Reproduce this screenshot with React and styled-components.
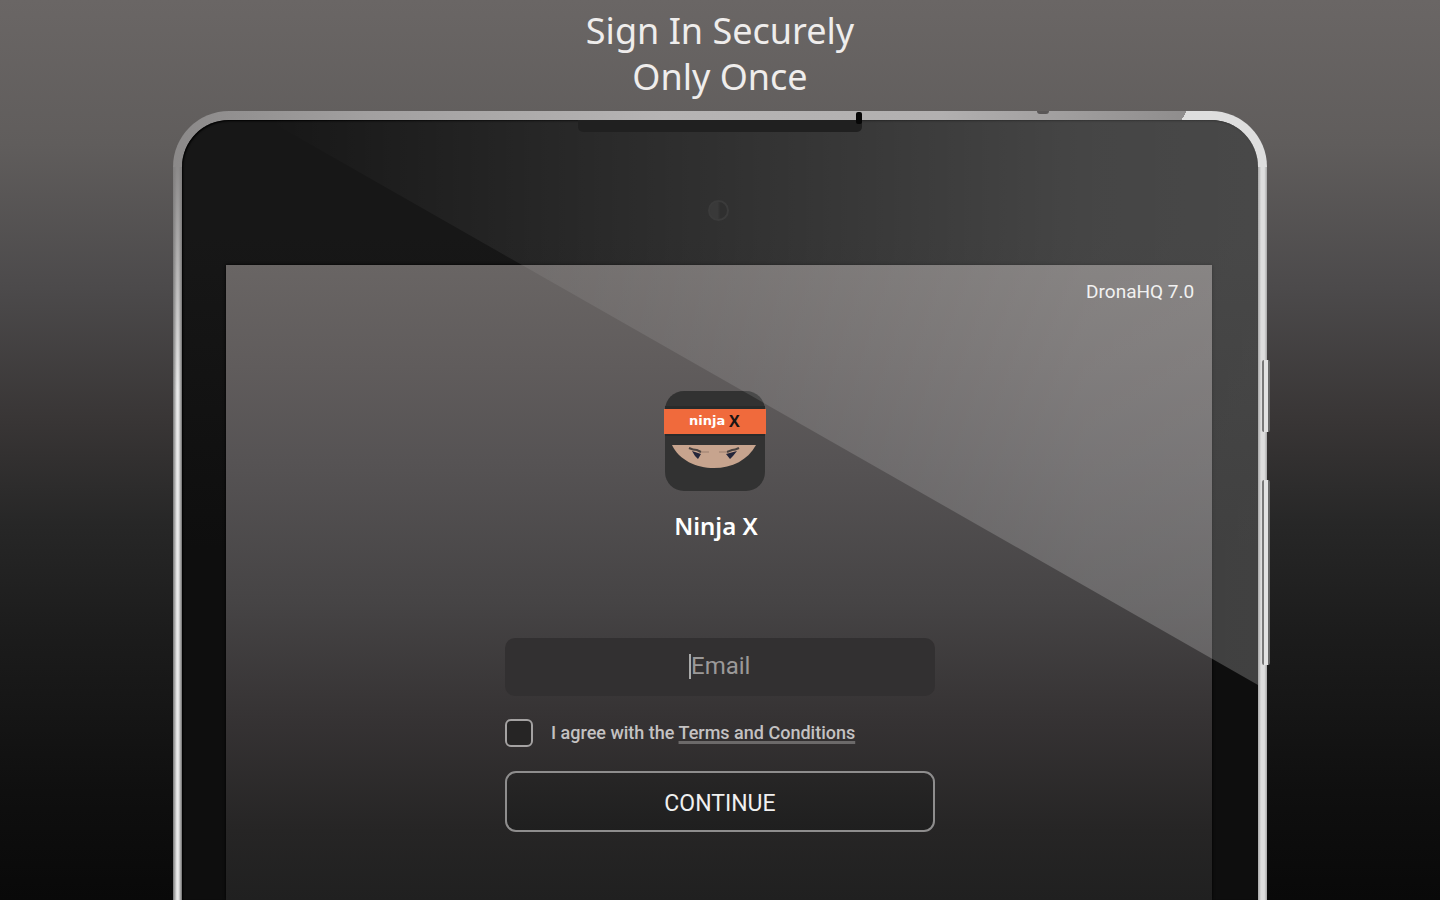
import styled, { createGlobalStyle } from "styled-components";

const GlobalStyle = createGlobalStyle`
    * {
        box-sizing: border-box;
    }

    body {
        margin: 0;
        background: #0a0a0a;
        font-family: Roboto, "Liberation Sans", sans-serif;
    }
`;
const Page = styled.main`
    display: flex;
    flex-direction: column;
    align-items: center;
    min-height: 100vh;
    overflow: hidden;
    background: linear-gradient(#6a6665 0%, #605d5c 16%, #4c4a4b 32%, #383535 47%, #272727 58%, #1c1c1c 70%, #0f0f0f 88%, #090909 100%);
`;
const Headline = styled.h1`
    margin: 0;
    padding: 8px 0 11px;
    color: #efedec;
    font-family: "Noto Sans", sans-serif;
    font-size: 36px;
    font-weight: 400;
    line-height: 46px;
    text-align: center;
`;
const Tablet = styled.section`
    position: relative;
    display: flex;
    flex: 1;
    width: 76%;
    padding: 9px 9px 0;
    border-radius: 56px 56px 0 0;
    background:
        linear-gradient(120deg, transparent 90%, #dedede 90%) top / 100% 56px no-repeat,
        linear-gradient(90deg, #8b8989 0%, #a2a0a0 18%, #b6b4b4 45%, #b2b0b0 70%, #8f8d8d 92.5%) top / 100% 56px no-repeat,
        linear-gradient(rgba(130, 128, 128, 0.9) 56px, rgba(130, 128, 128, 0) 280px) left / 9px 100% no-repeat,
        linear-gradient(90deg, #777777, #ededed 45%, #dedede 65%, #6e6e6e 100%) left / 9px 100% no-repeat,
        linear-gradient(90deg, #a8a8a8, #dedede 35%, #dedede 70%, #a8a8a8 100%) right / 9px 100% no-repeat,
        #111111;
`;
const Bezel = styled.div`
    position: relative;
    display: flex;
    flex: 1;
    padding: 145px 46px 0 44px;
    border-radius: 47px 47px 0 0;
    background: linear-gradient(#171717 15%, #0e0e0e 55%);
    box-shadow: inset 1px 1px 2px #000000;
    overflow: hidden;
`;
const Glare = styled.div`
    position: absolute;
    inset: 0;
    background: linear-gradient(90deg, rgba(255, 255, 255, 0) 8%, rgba(255, 255, 255, 0.2) 84%, rgba(255, 255, 255, 0.21) 100%);
    clip-path: polygon(86px 0, 100% 0, 100% 565px);
    pointer-events: none;
`;
const Speaker = styled.div`
    position: absolute;
    top: 9px;
    left: 37%;
    width: 26%;
    height: 12px;
    border-radius: 0 0 5px 5px;
    background: #202020;
    z-index: 1;
`;
const Slot = styled.span`
    position: absolute;
    right: 0;
    top: -8px;
    width: 6px;
    height: 12px;
    border-radius: 2px;
    background: #070707;
`;
const Microphone = styled.span`
    position: absolute;
    top: 0;
    left: 79%;
    width: 12px;
    height: 3px;
    border-radius: 0 0 6px 6px;
    background: #5a5757;
`;
const Camera = styled.span`
    position: absolute;
    top: 80px;
    left: 50%;
    width: 21px;
    height: 21px;
    margin-left: -12px;
    border: 2px solid #3b3b3b;
    border-radius: 50%;
    background: linear-gradient(90deg, #393939 45%, #2f2f2f 60%);
    z-index: 1;
`;
const SideKey = styled.span`
    position: absolute;
    top: ${(props) => props.$top}px;
    right: -3px;
    width: 8px;
    height: ${(props) => props.$height}px;
    border-left: 2px solid #777777;
    border-right: 2px solid #666666;
    border-radius: 2px;
    background: #e2e2e2;
`;
const Screen = styled.div`
    display: flex;
    flex: 1;
    flex-direction: column;
    align-items: center;
    padding: 16px 18px 16px 20px;
    background: linear-gradient(#696564 0%, #605c5c 16%, #565354 31%, #464445 53%, #363334 71%, #262525 89%, #202020 100%);
    box-shadow: 0 0 3px #000000;
`;
const Version = styled.p`
    align-self: flex-end;
    margin: 0 0 88px;
    color: #eeeeee;
    font-size: 19px;
    line-height: 22px;
`;
const AppName = styled.h2`
    margin: 17px 0 94px;
    padding-right: 8px;
    color: #ffffff;
    font-family: "Noto Sans", sans-serif;
    font-size: 24px;
    font-weight: 600;
    line-height: 36px;
`;
const Logo = styled.svg`
    display: block;
    width: 102px;
    height: 100px;
    margin-right: 10px;
`;
const Form = styled.form`
    display: flex;
    flex-direction: column;
    width: 100%;
    max-width: 430px;
`;
const EmailField = styled.label`
    display: flex;
    align-items: center;
    justify-content: center;
    height: 58px;
    padding-bottom: 2px;
    border-radius: 10px;
    background: #323031;
    cursor: text;
`;
const Caret = styled.span`
    width: 2px;
    height: 25px;
    background: #aaaaaa;
`;
const EmailInput = styled.input`
    width: 60px;
    padding: 0;
    border: 0;
    outline: 0;
    background: transparent;
    color: #dddddd;
    font: 24px/30px Roboto, sans-serif;

    &::placeholder {
        color: #9b9999;
        opacity: 1;
    }
`;
const Terms = styled.div`
    display: flex;
    align-items: center;
    gap: 18px;
    margin: 21px 0 22px;
    color: #c4c2c2;
    font-size: 18px;
    font-weight: 500;
    line-height: 32px;
`;
const Checkbox = styled.input`
    appearance: none;
    width: 28px;
    height: 28px;
    margin: 0;
    border: 2px solid #a4a2a2;
    border-radius: 6px;
    background: #262525;

    &:checked {
        background: #f06a3c;
    }
`;
const TermsLink = styled.a`
    color: inherit;
    text-decoration: underline;
    text-decoration-color: #6c6a6a;
    text-decoration-thickness: 3px;
    text-underline-offset: 2px;
    text-decoration-skip-ink: none;
`;
const Continue = styled.button`
    height: 61px;
    padding: 4px 0 0;
    border: 2px solid #8e8d8d;
    border-radius: 11px;
    background: linear-gradient(#272626, #1f1f1f);
    color: #f0f0f0;
    font: 23px/30px Roboto, sans-serif;
    cursor: pointer;
`;

function NinjaLogo() {
    return (
        <Logo viewBox="0 0 102 100" role="img" aria-label="Ninja X logo">
            <rect x="1" width="100" height="100" rx="19" fill="#323232" />
            <rect x="1" y="15" width="100" height="30" fill="#292b2b" />
            <rect y="18" width="102" height="25" fill="#f06a3c" />
            <text x="25" y="34" fill="#ffffff" fontFamily="DejaVu Sans, sans-serif" fontSize="13" fontWeight="700">ninja</text>
            <text x="65" y="36" fill="#1c1514" fontFamily="Open Sans, sans-serif" fontSize="16" fontWeight="700">X</text>
            <path d="M8 54H92C84 69 68 77 50 77S15 69 8 54Z" fill="#c7a48e" />
            <path d="M25 57Q29 59 33 59L37 61M75 57Q71 59 68 59L63 61" fill="none" stroke="#4c4441" strokeWidth="2" />
            <path d="M37 61L45 61M63 61L55 61" fill="none" stroke="#9b7f6e" strokeWidth="1" />
            <path d="M28 60L37 63L34 68L31 65ZM73 60L62 63L66 68L69 65Z" fill="#25263a" />
        </Logo>
    );
}

export default function App() {
    return (
        <>
            <GlobalStyle />
            <Page>
                <Headline>
                    Sign In Securely<br />Only Once
                </Headline>
                <Tablet>
                    <SideKey $top={249} $height={72} />
                    <SideKey $top={369} $height={185} />
                    <Microphone />
                    <Speaker>
                        <Slot />
                    </Speaker>
                    <Bezel>
                        <Camera />
                        <Screen>
                            <Version>DronaHQ 7.0</Version>
                            <NinjaLogo />
                            <AppName>Ninja X</AppName>
                            <Form onSubmit={(e) => e.preventDefault()}>
                                <EmailField>
                                    <Caret />
                                    <EmailInput type="email" placeholder="Email" aria-label="Email" />
                                </EmailField>
                                <Terms>
                                    <Checkbox type="checkbox" id="agree" />
                                    <label htmlFor="agree">
                                        I agree with the <TermsLink href="#terms">Terms and Conditions</TermsLink>
                                    </label>
                                </Terms>
                                <Continue type="submit">CONTINUE</Continue>
                            </Form>
                        </Screen>
                        <Glare />
                    </Bezel>
                </Tablet>
            </Page>
        </>
    );
}
